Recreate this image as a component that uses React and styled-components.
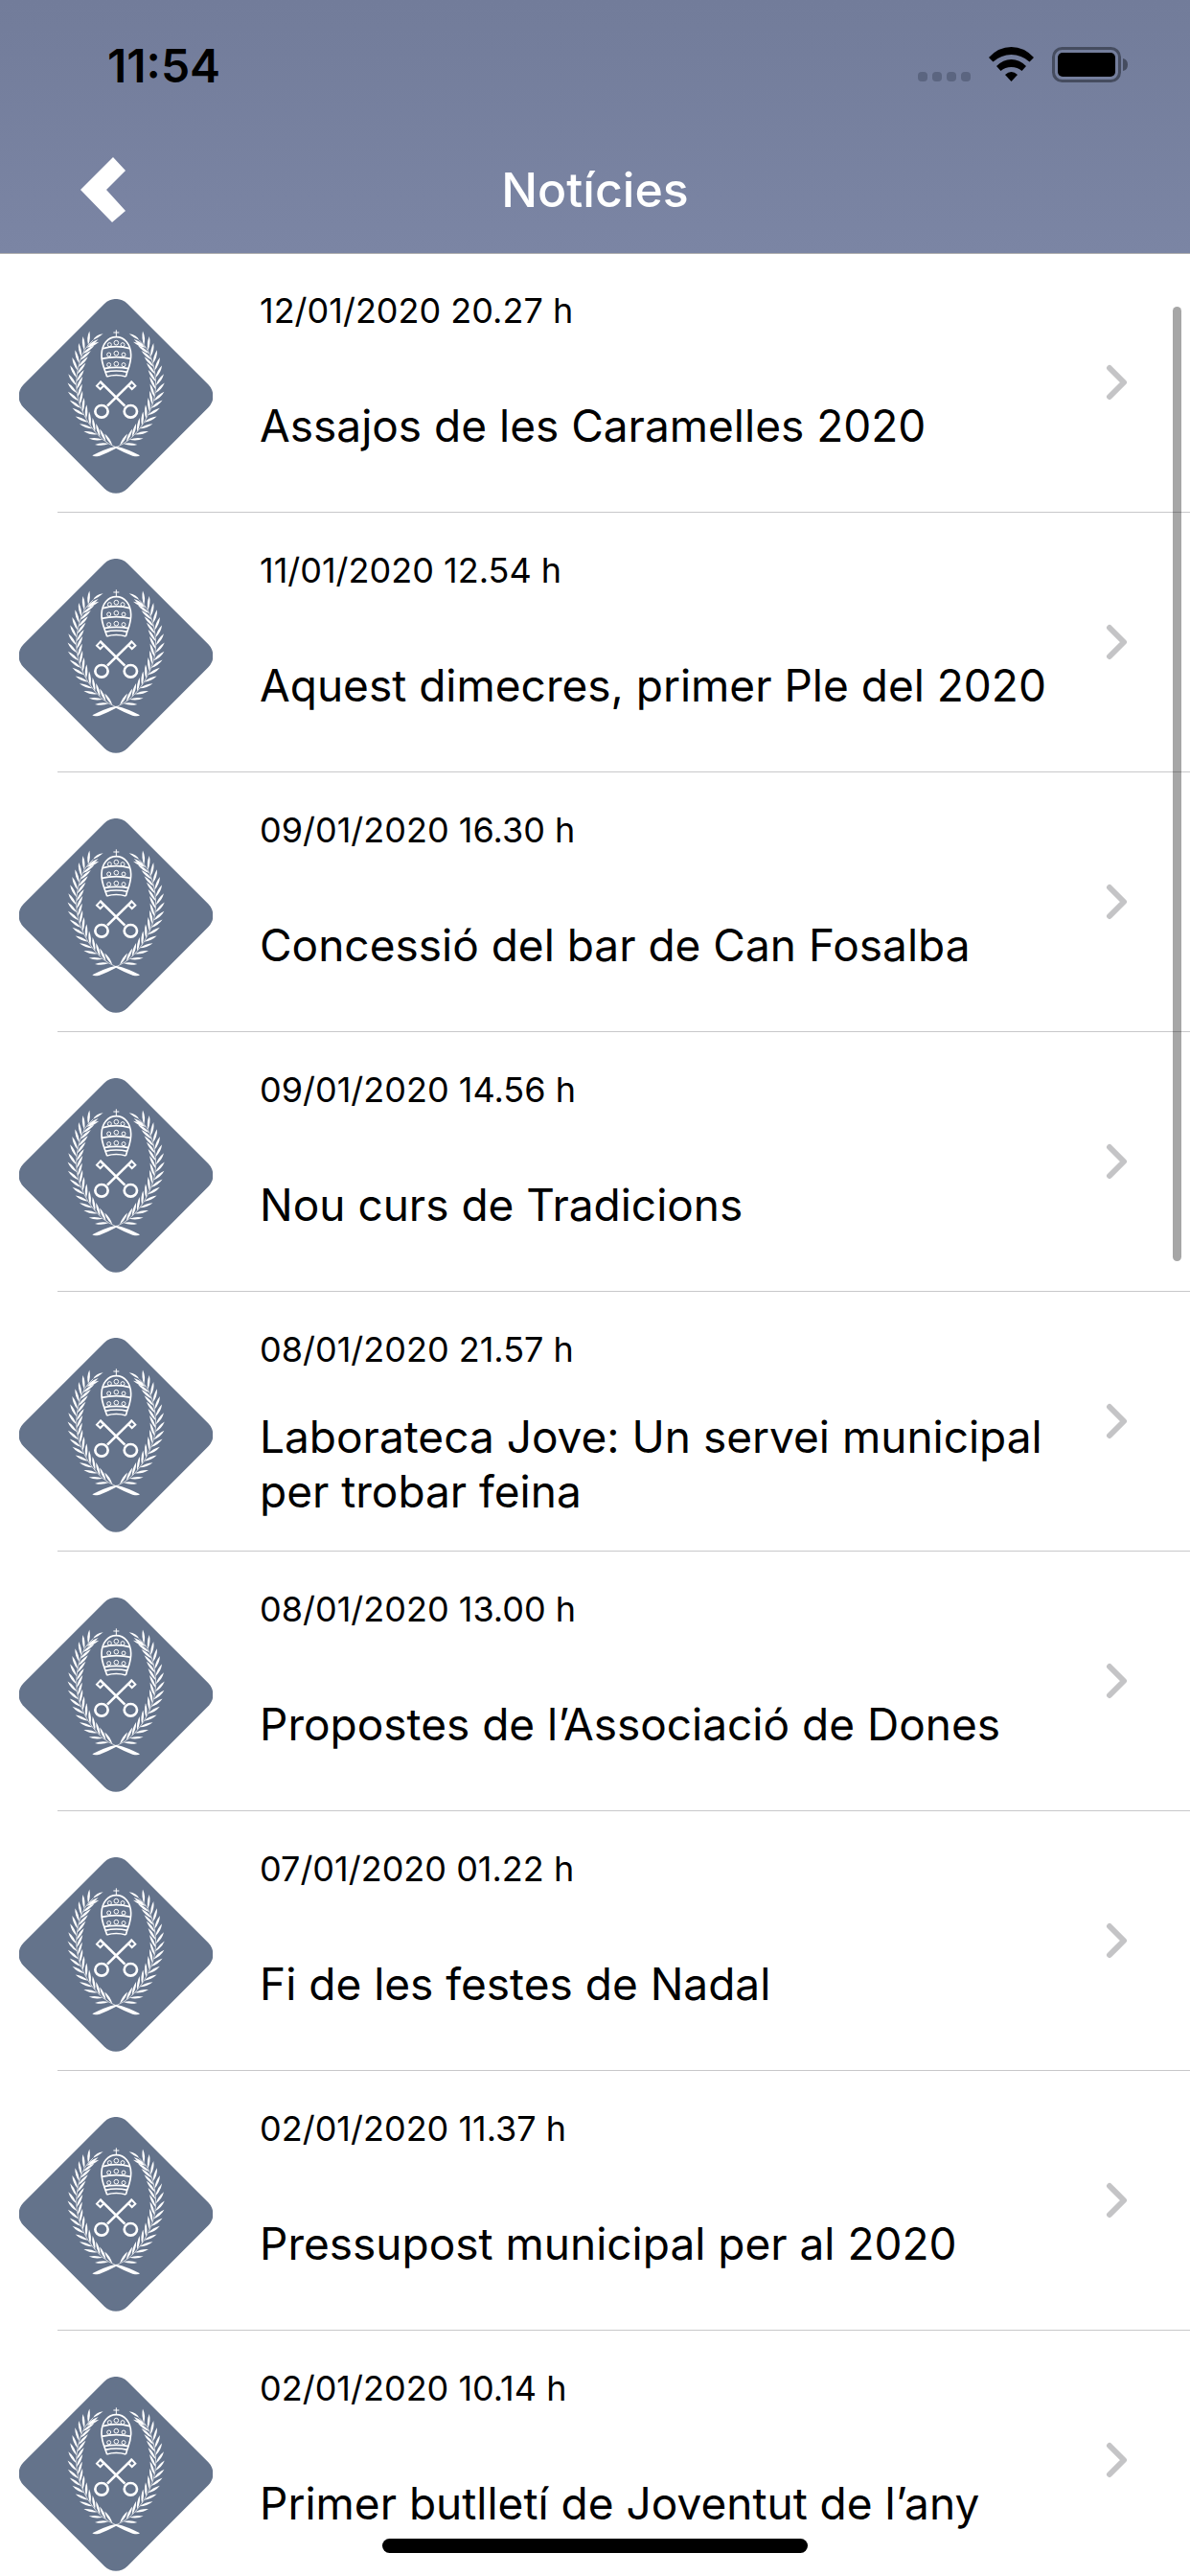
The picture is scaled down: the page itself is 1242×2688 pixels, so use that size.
import React from "react";
import styled, { createGlobalStyle } from "styled-components";

const GlobalStyle = createGlobalStyle`
  * {
    box-sizing: border-box;
  }
  body {
    margin: 0;
    background-color: #fff;
    font-family: Inter, "Liberation Sans", sans-serif;
  }
`;

const Screen = styled.div`
  position: relative;
  display: flex;
  flex-direction: column;
  height: 100vh;
  overflow: hidden;
  background-color: #fff;
`;

const Header = styled.header`
  position: relative;
  z-index: 1;
  flex-shrink: 0;
  background: linear-gradient(#727c9a, #7b85a4);
  box-shadow: 0 1px 0 #adadad;
`;

const StatusBar = styled.div`
  display: flex;
  align-items: center;
  justify-content: space-between;
  height: 132px;
  padding: 4px 64px 0 112px;
`;

const Clock = styled.span`
  font-size: 48px;
  font-weight: 600;
  color: #000;
`;

const StatusIcons = styled.div`
  display: flex;
  align-items: center;
`;

const NavBar = styled.div`
  display: grid;
  grid-template-columns: 1fr auto 1fr;
  align-items: center;
  height: 132px;
  padding: 0 72px;
`;

const BackButton = styled.button`
  justify-self: start;
  display: flex;
  padding: 12px;
  border: none;
  background: none;
`;

const PageTitle = styled.h1`
  margin: 0;
  font-size: 50px;
  font-weight: 500;
  color: #fff;
`;

const NewsList = styled.ul`
  flex: 1;
  min-height: 0;
  margin: 0;
  padding: 0;
  list-style: none;
  overflow-y: auto;
  scrollbar-width: none;
`;

const NewsRow = styled.a`
  display: flex;
  align-items: flex-start;
  height: 271px;
  padding-left: 20px;
  color: #000;
  text-decoration: none;
  background: linear-gradient(#c8c8ca, #c8c8ca) 60px 100% / 100% 1px no-repeat;
`;

const CrestIcon = styled.svg`
  flex-shrink: 0;
  margin-top: 48px;
`;

const NewsText = styled.div`
  flex: 1;
  min-width: 0;
  padding: 38px 0 0 49px;
`;

const NewsDate = styled.time`
  display: block;
  font-size: 36px;
  line-height: 44px;
`;

const NewsTitle = styled.div`
  display: flex;
  align-items: center;
  height: 114px;
  margin-top: 41px;
  font-size: 46px;
  line-height: 57px;
`;

const Disclosure = styled.svg`
  flex-shrink: 0;
  align-self: center;
  margin: 0 64px 2px 40px;
`;

const ScrollThumb = styled.div`
  position: absolute;
  z-index: 2;
  top: 320px;
  right: 9px;
  width: 9px;
  height: 996px;
  border-radius: 5px;
  background-color: rgba(0, 0, 0, 0.35);
`;

const HomeIndicator = styled.div`
  position: absolute;
  z-index: 2;
  bottom: 24px;
  left: 50%;
  width: 444px;
  height: 15px;
  border-radius: 8px;
  background-color: #000;
  transform: translateX(-50%);
`;

const news = [
  { date: "12/01/2020 20.27 h", title: "Assajos de les Caramelles 2020" },
  { date: "11/01/2020 12.54 h", title: "Aquest dimecres, primer Ple del 2020" },
  { date: "09/01/2020 16.30 h", title: "Concessió del bar de Can Fosalba" },
  { date: "09/01/2020 14.56 h", title: "Nou curs de Tradicions" },
  {
    date: "08/01/2020 21.57 h",
    title: "Laborateca Jove: Un servei municipal per trobar feina",
  },
  { date: "08/01/2020 13.00 h", title: "Propostes de l’Associació de Dones" },
  { date: "07/01/2020 01.22 h", title: "Fi de les festes de Nadal" },
  { date: "02/01/2020 11.37 h", title: "Pressupost municipal per al 2020" },
  { date: "02/01/2020 10.14 h", title: "Primer butlletí de Joventut de l’any" },
];

// points of the left laurel branch, from the crossing up to the tip
const branch = [
  [363, 530],
  [341, 519],
  [322, 506],
  [305, 490],
  [290, 472],
  [276, 452],
  [264, 430],
  [254, 408],
  [246, 385],
  [241, 361],
  [239, 337],
  [240, 313],
  [243, 290],
  [248, 268],
  [255, 247],
  [264, 227],
  [276, 210],
  [291, 195],
];

// one leaf on each side of every point, the inner one a little further up
const leaves = branch.slice(1, -1).flatMap(([x, y], i) => {
  const [px, py] = branch[i];
  const angle = (Math.atan2(y - py, x - px) * 180) / Math.PI;
  return [
    { x, y, angle: angle - 30 },
    { x: (x + px) / 2, y: (y + py) / 2, angle: angle + 30 },
  ];
});

function Branch() {
  return (
    <g fill="#fff">
      <polyline
        points={branch.map((p) => p.join(",")).join(" ")}
        fill="none"
        stroke="#fff"
        strokeWidth="2"
      />
      {leaves.map((leaf, i) => (
        <path
          key={i}
          d="M0 0Q22 -8 44 0Q22 7 0 0Z"
          transform={`translate(${leaf.x} ${leaf.y}) rotate(${leaf.angle})`}
        />
      ))}
      <path d="M291 195Q299 178 323 175Q308 188 291 195Z" />
      <path d="M276 212Q292 212 308 192Q288 198 276 212Z" />
      <path d="M363 527Q400 535 438 556Q432 561 415 557Q385 545 363 533Z" />
    </g>
  );
}

function Key() {
  return (
    <g fill="none" stroke="#fff">
      <path d="M314 325L391 401" strokeWidth="8" />
      <ellipse cx="409" cy="418" rx="20" ry="19" strokeWidth="8" />
      <path d="M317 323L303 338L314 348L325 337" strokeWidth="6" />
    </g>
  );
}

function Crest() {
  return (
    <CrestIcon width="202" height="203" viewBox="60 66 606 609" aria-hidden="true">
      <rect
        x="133"
        y="140"
        width="460"
        height="460"
        rx="51"
        fill="#64738b"
        transform="rotate(45 363 370)"
      />
      <Branch />
      <g transform="translate(727 0) scale(-1 1)">
        <Branch />
      </g>
      <g fill="none" stroke="#fff" strokeWidth="5">
        <path d="M364 163V184M355 171H373" strokeWidth="3" />
        <path d="M335 309C327 283 317 268 318 240C319 208 338 185 364 185C390 185 409 208 410 240C411 268 401 283 394 309" />
        <path d="M322 221Q364 209 406 221M318 253Q364 243 410 253M325 284Q364 276 403 284M329 295Q364 287 399 295M334 309Q364 300 394 309" />
        <g strokeWidth="3">
          <circle cx="364" cy="203" r="7" />
          <circle cx="343" cy="209" r="6" />
          <circle cx="384" cy="209" r="6" />
          <circle cx="364" cy="236" r="7" />
          <circle cx="341" cy="240" r="6" />
          <circle cx="387" cy="240" r="6" />
          <circle cx="364" cy="269" r="7" />
          <circle cx="341" cy="272" r="6" />
          <circle cx="387" cy="272" r="6" />
        </g>
      </g>
      <Key />
      <g transform="translate(727 0) scale(-1 1)">
        <Key />
      </g>
    </CrestIcon>
  );
}

function Status() {
  return (
    <StatusIcons>
      <svg width="220" height="38" viewBox="0 0 220 38" aria-hidden="true">
        <g fill="#5b6580">
          <rect x="0" y="26" width="10" height="10" rx="4" />
          <rect x="15" y="26" width="10" height="10" rx="4" />
          <rect x="30" y="26" width="10" height="10" rx="4" />
          <rect x="45" y="26" width="10" height="10" rx="4" />
        </g>
        <path d="M74 11Q84 0 97.500 0T121 11L116.500 15.500Q108 8 97.500 8T78.500 15.500Z" />
        <path d="M82 20Q89 13 97.500 13T113 20L108.500 25Q104 21 97.500 21T86.500 25Z" />
        <path d="M91 29Q97.500 23 104 29L97.500 36Z" />
        <rect
          x="141.500"
          y="1.500"
          width="69"
          height="34"
          rx="9"
          fill="none"
          stroke="#454c5f"
          strokeWidth="3"
        />
        <rect x="146" y="6" width="60" height="25" rx="5" />
        <path d="M214 12Q219 13 219 18.500T214 25Z" fill="#454c5f" />
      </svg>
    </StatusIcons>
  );
}

function App() {
  return (
    <Screen>
      <GlobalStyle />
      <Header>
        <StatusBar>
          <Clock>11:54</Clock>
          <Status />
        </StatusBar>
        <NavBar>
          <BackButton type="button" aria-label="Enrere">
            <svg width="47" height="68" viewBox="0 0 47 68" fill="#fff">
              <path d="M34 0L47 14L27 34L47 56L33 68L0 34Z" />
            </svg>
          </BackButton>
          <PageTitle>Notícies</PageTitle>
        </NavBar>
      </Header>
      <NewsList>
        {news.map((item) => (
          <li key={item.date}>
            <NewsRow href="#">
              <Crest />
              <NewsText>
                <NewsDate>{item.date}</NewsDate>
                <NewsTitle>{item.title}</NewsTitle>
              </NewsText>
              <Disclosure width="24" height="38" viewBox="0 0 24 38">
                <path
                  d="M4 4L19 19L4 34"
                  fill="none"
                  stroke="#c4c4c6"
                  strokeWidth="6"
                  strokeLinecap="round"
                  strokeLinejoin="round"
                />
              </Disclosure>
            </NewsRow>
          </li>
        ))}
      </NewsList>
      <ScrollThumb />
      <HomeIndicator />
    </Screen>
  );
}

export default App;
